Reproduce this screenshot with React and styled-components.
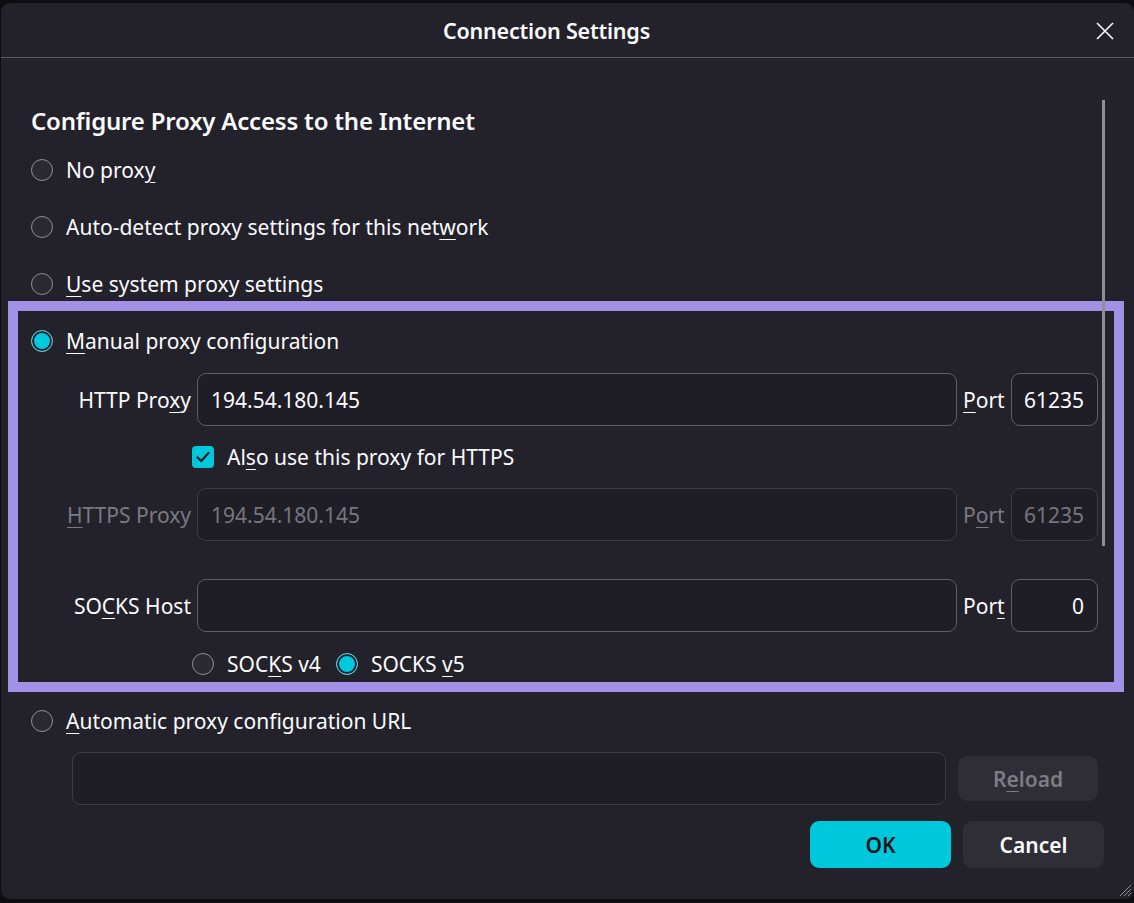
import React from 'react'
import styled, { createGlobalStyle } from 'styled-components'

const GlobalStyle = createGlobalStyle`
  html, body {
    margin: 0;
    padding: 0;
    background: #0e0e12;
  }
  body {
    font-family: "Noto Sans", "Open Sans", sans-serif;
    color: #fbfbfe;
  }
  * { box-sizing: border-box; }
`

const Page = styled.div`
  width: 1134px;
  height: 903px;
  padding: 3px 0 4px 1px;
`

const Dialog = styled.div`
  position: relative;
  width: 1133px;
  height: 896px;
  background: #23222b;
  border-radius: 9px;
  display: flex;
  flex-direction: column;
  overflow: hidden;
`

const Header = styled.div`
  position: relative;
  height: 55px;
  flex-shrink: 0;
  display: flex;
  align-items: center;
  justify-content: center;
  padding-right: 42px;
  border-bottom: 1px solid #5b5a62;
`

const Title = styled.h1`
  margin: 0;
  font-size: 21.5px;
  font-weight: 600;
  letter-spacing: -0.2px;
`

const CloseButton = styled.button`
  position: absolute;
  right: 18px;
  top: 17px;
  width: 22px;
  height: 22px;
  padding: 0;
  border: 0;
  background: none;
  color: #fbfbfe;
  display: flex;
  align-items: center;
  justify-content: center;
`

const Body = styled.div`
  position: relative;
  flex: 1;
  display: flex;
  flex-direction: column;
  padding: 0 30px 0 30px;
`

const ScrollThumb = styled.div`
  position: absolute;
  right: 29px;
  top: 42px;
  width: 3px;
  height: 446px;
  background: #8f8e95;
`

const Heading = styled.h2`
  margin: 0;
  height: 83px;
  padding-top: 43px;
  font-size: 24px;
  font-weight: 600;
  line-height: 40px;
  letter-spacing: -0.2px;
`

const Row = styled.label`
  display: flex;
  align-items: center;
  gap: 13px;
  height: ${p => p.$h || 57}px;
  font-size: 21px;
  white-space: nowrap;
  color: ${p => (p.$disabled ? '#7b7a82' : '#fbfbfe')};
`

const Key = styled.span`
  text-decoration: underline;
  text-decoration-thickness: 1px;
  text-underline-offset: 4px;
`

const RadioDot = styled.span`
  width: 22px;
  height: 22px;
  border-radius: 50%;
  flex-shrink: 0;
  border: 1.5px solid ${p => (p.$on ? '#63c9d3' : '#8f8e96')};
  background: ${p => (p.$on ? '#00c8dc' : '#2b2a33')};
  box-shadow: ${p => (p.$on ? 'inset 0 0 0 2px #1c1b22' : 'none')};
`

const Highlight = styled.div`
  margin: -11px -20px 0 -23px;
  border: 10px solid #a391e8;
  padding: 1px 16px 0 13px;
`

const FieldGrid = styled.div`
  display: grid;
  grid-template-columns: 141px 760px 42px 87px;
  column-gap: 6px;
  margin-left: 19px;
  align-items: center;
`

const FieldLabel = styled.span`
  font-size: 21px;
  white-space: nowrap;
  color: ${p => (p.$disabled ? '#7b7a82' : '#fbfbfe')};
  justify-self: ${p => (p.$left ? 'start' : 'end')};
`

const Input = styled.div`
  height: ${p => p.$h || 53}px;
  border: 1px solid ${p => (p.$disabled ? '#3d3c44' : '#5f5e66')};
  border-radius: 9px;
  background: #1f1e26;
  display: flex;
  align-items: center;
  justify-content: ${p => (p.$end ? 'flex-end' : 'flex-start')};
  padding: 0 13px;
  font-size: 21px;
  color: ${p => (p.$disabled ? '#77767e' : '#fbfbfe')};
`

const UrlInput = styled(Input)`
  flex: 1;
`

const CheckRow = styled.label`
  grid-column: 2 / 5;
  height: 62px;
  margin-left: -5px;
  display: flex;
  align-items: center;
  gap: 13px;
  font-size: 21px;
`

const CheckBox = styled.span`
  width: 22px;
  height: 22px;
  border-radius: 4px;
  background: #00c8dc;
  display: flex;
  align-items: center;
  justify-content: center;
  flex-shrink: 0;
`

const Spacer = styled.div`
  grid-column: 1 / 5;
  height: ${p => p.$h}px;
`

const VersionRow = styled.div`
  grid-column: 2 / 5;
  display: flex;
  align-items: center;
  gap: 15px;
  height: 36px;
  margin: 14px 0 0 -5px;
`

const UrlRow = styled.div`
  display: flex;
  align-items: center;
  gap: 12px;
  margin: 3px 6px 0 41px;
`

const Button = styled.button`
  width: ${p => p.$w || 141}px;
  height: ${p => p.$h || 47}px;
  border: 0;
  border-radius: 9px;
  font-family: inherit;
  font-size: 21px;
  font-weight: 600;
  background: ${p => (p.$primary ? '#00c8dc' : '#2f2e36')};
  color: ${p => (p.$primary ? '#15141a' : p.$disabled ? '#7d7c84' : '#fbfbfe')};
  flex-shrink: 0;
`

const Footer = styled.div`
  display: flex;
  justify-content: flex-end;
  gap: 12px;
  margin-top: 16px;
`

const Grip = styled.svg`
  position: absolute;
  right: 2px;
  bottom: 2px;
`

function Radio({ on, children, h }) {
  return (
    <Row $h={h}>
      <RadioDot $on={on} />
      <span>{children}</span>
    </Row>
  )
}

function App() {
  return (
    <Page>
      <GlobalStyle />
      <Dialog>
        <Header>
          <Title>Connection Settings</Title>
          <CloseButton aria-label="Close">
            <svg width="20" height="20" viewBox="0 0 20 20">
              <path d="M2 2 L18 18 M18 2 L2 18" stroke="#fbfbfe" strokeWidth="1.6" />
            </svg>
          </CloseButton>
        </Header>
        <Body>
          <ScrollThumb />
          <Heading>Configure Proxy Access to the Internet</Heading>
          <Radio>No prox<Key>y</Key></Radio>
          <Radio>Auto-detect proxy settings for this net<Key>w</Key>ork</Radio>
          <Radio><Key>U</Key>se system proxy settings</Radio>

          <Highlight>
            <Radio on><Key>M</Key>anual proxy configuration</Radio>
            <FieldGrid>
              <Spacer $h={4} />
              <FieldLabel>HTTP Pro<Key>x</Key>y</FieldLabel>
              <Input>194.54.180.145</Input>
              <FieldLabel $left><Key>P</Key>ort</FieldLabel>
              <Input $end>61235</Input>

              <span />
              <CheckRow>
                <CheckBox>
                  <svg width="16" height="16" viewBox="0 0 16 16">
                    <path d="M2.5 8.5 L6.2 12 L13.5 4" fill="none" stroke="#1c1b22" strokeWidth="2.2" strokeLinecap="round" strokeLinejoin="round" />
                  </svg>
                </CheckBox>
                <span>Al<Key>s</Key>o use this proxy for HTTPS</span>
              </CheckRow>

              <FieldLabel $disabled><Key>H</Key>TTPS Proxy</FieldLabel>
              <Input $disabled>194.54.180.145</Input>
              <FieldLabel $disabled $left>P<Key>o</Key>rt</FieldLabel>
              <Input $disabled $end>61235</Input>

              <Spacer $h={38} />

              <FieldLabel>SO<Key>C</Key>KS Host</FieldLabel>
              <Input />
              <FieldLabel $left>Por<Key>t</Key></FieldLabel>
              <Input $end>0</Input>

              <span />
              <VersionRow>
                <Row $h={36}>
                  <RadioDot />
                  <span>SOC<Key>K</Key>S v4</span>
                </Row>
                <Row $h={36}>
                  <RadioDot $on />
                  <span>SOCKS <Key>v</Key>5</span>
                </Row>
              </VersionRow>
            </FieldGrid>
          </Highlight>

          <Radio><Key>A</Key>utomatic proxy configuration URL</Radio>
          <UrlRow>
            <UrlInput $disabled />
            <Button $w={140} $h={45} $disabled>R<Key>e</Key>load</Button>
          </UrlRow>
          <Footer>
            <Button $primary>OK</Button>
            <Button>Cancel</Button>
          </Footer>
        </Body>
        <Grip width="16" height="16" viewBox="0 0 16 16">
          <path d="M15 4 L4 15 M15 8 L8 15 M15 12 L12 15" stroke="#8f8e95" strokeWidth="1" />
        </Grip>
      </Dialog>
    </Page>
  )
}

export default App
